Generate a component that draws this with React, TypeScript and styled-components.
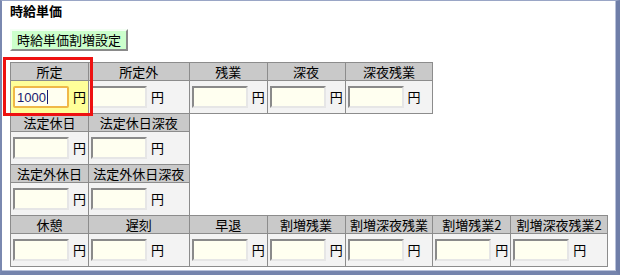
import React from "react";
import styled, { createGlobalStyle } from "styled-components";

const GlobalStyle = createGlobalStyle`
  html, body {
    margin: 0;
    padding: 0;
    background: #ffffff;
  }
  body {
    font-family: "Noto Sans CJK JP", "Liberation Sans", sans-serif;
    font-size: 13px;
    color: #000;
  }
`;

const Frame = styled.div`
  box-sizing: border-box;
  width: 620px;
  height: 275px;
  background: #ffffff;
  border-left: 2px solid #7a88b0;
  border-top: 1px solid #9aa6c6;
  border-right: 4px solid #6f7ea8;
  border-bottom: 4px solid #7584ad;
  box-shadow: inset -1px -1px 0 #b8c1da;
  padding: 2px 0 0 8px;
`;

const Title = styled.div`
  font-weight: bold;
  font-size: 13px;
  line-height: 16px;
  height: 16px;
`;

const GreenButton = styled.button`
  display: block;
  margin: 10px 0 0 0;
  width: 118px;
  height: 22px;
  padding: 0;
  background: #ccffcc;
  border: 2px solid;
  border-color: #f4fff4 #8a8a8a #8a8a8a #f4fff4;
  font-family: "Noto Sans CJK JP", "Liberation Sans", sans-serif;
  font-size: 13px;
  line-height: 16px;
  color: #000;
`;

const TableWrap = styled.div`
  position: relative;
  margin-top: 11px;
  width: 598px;
`;

const RateTable = styled.table`
  border-collapse: collapse;
  table-layout: fixed;
  border-left: 1px solid #333;
  border-bottom: 1px solid #333;
`;

const HeadCell = styled.th`
  height: 17px;
  padding: 0;
  background: #c9c9c9;
  border: 1px solid #8c8c8c;
  font-weight: normal;
  font-size: 13px;
  line-height: 16px;
  text-align: center;
  white-space: nowrap;
`;

const InputCell = styled.td<{ $active?: boolean }>`
  height: 32px;
  padding: 0 0 0 2px;
  background: ${(p) => (p.$active ? "#ffff99" : "#f3f3f3")};
  border: 1px solid #8c8c8c;
  white-space: nowrap;
  vertical-align: middle;
`;

const EmptyCell = styled.td`
  padding: 0;
  border: none;
  background: transparent;
`;

const Field = styled.div`
  display: flex;
  align-items: center;
  gap: 4px;
`;

const Box = styled.input`
  box-sizing: border-box;
  width: 56px;
  height: 22px;
  margin: 0;
  padding: 0 2px;
  background: #fffff0;
  border: 2px solid;
  border-color: #8a8a8a #e6e6e6 #e6e6e6 #8a8a8a;
  font-family: "Liberation Sans", sans-serif;
  font-size: 13px;
`;

const FocusBox = styled.div`
  box-sizing: border-box;
  width: 56px;
  height: 22px;
  padding: 0 2px;
  display: flex;
  align-items: center;
  background: #fffff0;
  border: 2px solid #f0b848;
  border-radius: 2px;
  font-family: "Liberation Sans", sans-serif;
  font-size: 13px;
  color: #1a1a6e;
`;

const Caret = styled.span`
  display: inline-block;
  width: 1px;
  height: 14px;
  margin-left: 1px;
  background: #1a1a6e;
`;

const Yen = styled.span`
  font-size: 13px;
  line-height: 16px;
`;

const Highlight = styled.div`
  position: absolute;
  left: -7px;
  top: -5px;
  width: 84px;
  height: 53px;
  border: 3px solid #ee1111;
  pointer-events: none;
`;

const widths = [78, 101, 78, 78, 88, 78, 97];

type Row = string[];

const blocks: Row[] = [
  ["所定", "所定外", "残業", "深夜", "深夜残業"],
  ["法定休日", "法定休日深夜"],
  ["法定外休日", "法定外休日深夜"],
  ["休憩", "遅刻", "早退", "割増残業", "割増深夜残業", "割増残業2", "割増深夜残業2"],
];

const Yenfield = ({ active }: { active?: boolean }) => (
  <Field>
    {active ? (
      <FocusBox>
        1000
        <Caret />
      </FocusBox>
    ) : (
      <Box type="text" readOnly />
    )}
    <Yen>円</Yen>
  </Field>
);

export default function App() {
  return (
    <>
      <GlobalStyle />
      <Frame>
        <Title>時給単価</Title>
        <GreenButton type="button">時給単価割増設定</GreenButton>
        <TableWrap>
          <RateTable>
            <colgroup>
              {widths.map((w, i) => (
                <col key={i} style={{ width: w }} />
              ))}
            </colgroup>
            <tbody>
              {blocks.map((labels, b) => (
                <React.Fragment key={b}>
                  <tr>
                    {widths.map((_, i) =>
                      i < labels.length ? (
                        <HeadCell key={i}>{labels[i]}</HeadCell>
                      ) : (
                        <EmptyCell key={i} />
                      )
                    )}
                  </tr>
                  <tr>
                    {widths.map((_, i) =>
                      i < labels.length ? (
                        <InputCell key={i} $active={b === 0 && i === 0}>
                          <Yenfield active={b === 0 && i === 0} />
                        </InputCell>
                      ) : (
                        <EmptyCell key={i} />
                      )
                    )}
                  </tr>
                </React.Fragment>
              ))}
            </tbody>
          </RateTable>
          <Highlight />
        </TableWrap>
      </Frame>
    </>
  );
}
